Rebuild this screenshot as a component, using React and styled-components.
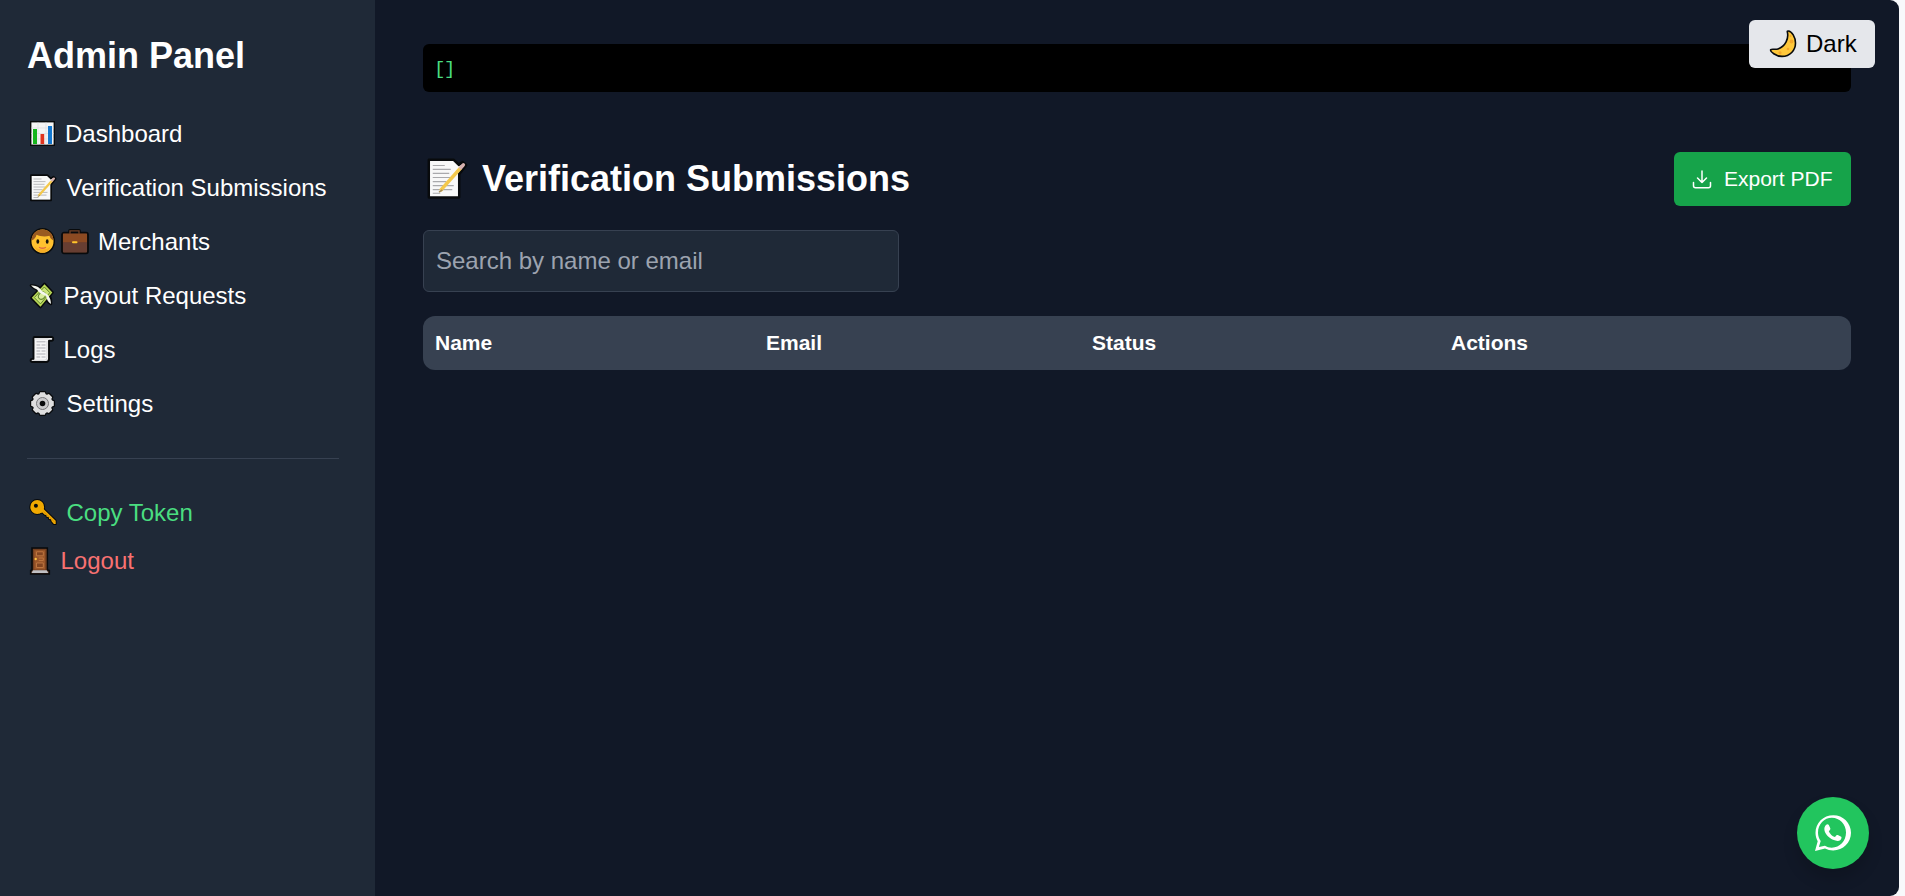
import React from "react";
import styled, { createGlobalStyle } from "styled-components";

const Global = createGlobalStyle`
  * { box-sizing: border-box; }
  body { margin: 0; background: #f8f9fb; font-family: "Liberation Sans", Arial, sans-serif; overflow: hidden; }
  button, input { font: inherit; }
`;

const Shell = styled.div`
  display: flex;
  width: 1899px;
  height: 896px;
  background: #111827;
  color: #fff;
  border-radius: 0 9px 9px 0;
  overflow: hidden;
`;

const Sidebar = styled.aside`
  width: 375px;
  flex: none;
  padding: 35px 36px 0 27px;
  background: #1f2937;
`;

const Brand = styled.h1`
  margin: 0 0 39px;
  font-size: 36px;
  line-height: 42px;
  font-weight: 700;
`;

const Nav = styled.nav`
  display: flex;
  flex-direction: column;
  align-items: flex-start;
  gap: ${(p) => p.$gap}px;
`;

const NavItem = styled.button`
  display: flex;
  align-items: center;
  height: 36px;
  padding: 0;
  border: 0;
  background: none;
  font-size: 24px;
  line-height: 36px;
  white-space: nowrap;
  color: ${(p) => p.$color || "#fff"};
`;

const IconSlot = styled.span`
  display: flex;
  flex: none;
  gap: 4px;
  width: ${(p) => p.$width}px;
  padding-left: 2px;
`;

const Divider = styled.hr`
  height: 1px;
  margin: 36px 0;
  border: 0;
  background: #374151;
`;

const Main = styled.main`
  flex: 1;
  padding: 44px 48px 0;
`;

const Output = styled.pre`
  height: 48px;
  margin: 0 0 60px;
  padding: 13px 11px;
  border-radius: 6px;
  background: #000;
  color: #4ade80;
  font: 19px/24px "Liberation Mono", monospace;
  letter-spacing: -1.5px;
`;

const PageHeader = styled.header`
  display: flex;
  align-items: center;
  justify-content: space-between;
  height: 54px;
  margin-bottom: 24px;
`;

const PageTitle = styled.h2`
  display: flex;
  align-items: center;
  gap: 14px;
  margin: 0;
  padding-left: 3px;
  font-size: 36px;
  line-height: 54px;
  font-weight: 700;
`;

const ExportButton = styled.button`
  display: flex;
  align-items: center;
  gap: 10px;
  width: 177px;
  height: 54px;
  padding: 0 0 0 16px;
  border: 0;
  border-radius: 6px;
  background: #16a34a;
  color: #fff;
  font-size: 21px;
  white-space: nowrap;
`;

const Search = styled.input`
  display: block;
  width: 476px;
  height: 62px;
  margin-bottom: 24px;
  padding: 0 12px;
  border: 1px solid #374151;
  border-radius: 6px;
  background: #1f2937;
  color: #fff;
  font-size: 24px;
  &::placeholder { color: #9ca3af; opacity: 1; }
`;

const Table = styled.div`
  border-radius: 12px;
  overflow: hidden;
`;

const HeadRow = styled.div`
  display: grid;
  grid-template-columns: 331px 326px 359px 1fr;
  height: 54px;
  background: #374151;
`;

const HeadCell = styled.div`
  padding-left: 12px;
  font-size: 21px;
  line-height: 54px;
  font-weight: 700;
`;

const ThemeToggle = styled.button`
  position: fixed;
  top: 20px;
  left: 1749px;
  display: flex;
  align-items: center;
  gap: 9px;
  width: 126px;
  height: 48px;
  padding: 0 0 0 20px;
  border: 0;
  border-radius: 6px;
  background: #e5e7eb;
  color: #000;
  font-size: 24px;
`;

const ChatButton = styled.button`
  position: fixed;
  top: 797px;
  left: 1797px;
  display: flex;
  align-items: center;
  justify-content: center;
  width: 72px;
  height: 72px;
  padding: 0;
  border: 0;
  border-radius: 50%;
  background: #22c55e;
  box-shadow: 0 10px 15px rgba(0, 0, 0, 0.16);
`;

const Svg = styled.svg`
  display: block;
  flex: none;
  width: ${(p) => p.$size || 28}px;
  height: ${(p) => p.$size || 28}px;
`;

const ChartIcon = () => (
  <Svg viewBox="0 0 28 28">
    <path d="M1 1h25v25H1z" fill="#080a0c" />
    <path d="M2.400 2.400h22.200v22.200H2.400z" fill="#f5f5f5" />
    <path d="M2.400 8h22.200M2.400 13.500h22.200M2.400 19h22.200M9 2.400v22.200M17 2.400v22.200" stroke="#dedee2" strokeWidth=".7" />
    <path d="M4 9h4v15H4z" fill="#16b51d" />
    <path d="M11.500 14h3.700v10h-3.700z" fill="#e0341f" />
    <path d="M19 6h4v18h-4z" fill="#1378d0" />
  </Svg>
);

const NoteIcon = ({ size }) => (
  <Svg viewBox="0 0 28 28" $size={size}>
    <path d="M2 1.200h16.200l3.600 3.300 2.700-1.700 2.100 1.900-4.600 6v15.500H2z" fill="#f7f7f7" stroke="#080a0c" strokeWidth="1.900" strokeLinejoin="round" />
    <path d="M2.700 2H18l3.300 3.300V25.500H2.700z" fill="#f8f8f8" />
    <path d="M4.500 5h8M4.500 7.600h12M4.500 10.300h11M4.500 13h12M4.500 15.700h9M4.500 18.400h14M4.500 21.100h13M4.500 23.500h5" stroke="#a9a9ac" strokeWidth=".8" />
    <path d="M9.600 21.800 23.200 6.500" stroke="#f4c84b" strokeWidth="2.300" />
    <path d="m8.700 22.800 2.200-1.600" stroke="#a68d59" strokeWidth="1" />
    <path d="m23.200 6.500 1.700-1.900" stroke="#d7b1af" strokeWidth="2.300" strokeLinecap="round" />
  </Svg>
);

const PersonIcon = () => (
  <Svg viewBox="0 0 28 28">
    <ellipse cx="13.500" cy="13.200" rx="11.800" ry="12.400" fill="#ffc12f" stroke="#080a0c" strokeWidth="1.500" />
    <path d="M2.700 12.500C2.500 6 7 1.600 13.500 1.600S24.500 6 24.300 12.500c-2-1-3.300-2.600-3.800-4.700-4.500 1.200-9.500.6-13-1-.4 2.400-2 4.600-4.800 5.700z" fill="#9a5a20" />
    <path d="M5 18q3 6.700 8.500 6.700T22 18q-3.500 3.500-8.500 3.500T5 18z" fill="#f7ae26" />
    <ellipse cx="8.800" cy="13.500" rx="1.400" ry="2.200" fill="#17130c" />
    <ellipse cx="18.200" cy="13.500" rx="1.400" ry="2.200" fill="#17130c" />
    <path d="M10.500 19.500q3 1.600 6 0" fill="none" stroke="#e06c43" strokeWidth="1.400" strokeLinecap="round" />
  </Svg>
);

const BriefcaseIcon = () => (
  <Svg viewBox="0 0 28 28">
    <path d="M9 6V2.700h9V6" fill="none" stroke="#080a0c" strokeWidth="3.600" strokeLinejoin="round" />
    <rect x="1" y="4.700" width="26" height="20.600" rx="2" fill="#653923" stroke="#080a0c" strokeWidth="1.800" />
    <path d="M2 5.700h24v9H2z" fill="#8c4a22" />
    <path d="M2 14.300h24v10H2z" fill="#673e32" />
    <path d="M9 6V2.800h9V6" fill="none" stroke="#714026" strokeWidth="1.300" />
    <rect x="11" y="13.300" width="5.500" height="2" rx="1" fill="#ffc52c" />
  </Svg>
);

const MoneyIcon = () => (
  <Svg viewBox="0 0 28 28">
    <g stroke="#080a0c" strokeWidth="2.600" strokeLinejoin="round">
      <path d="m15.500 2 8 8.500L11.500 25 2.500 15.800z" />
      <path d="M2 3.500c5-.5 9 1.500 12 6.500 5 1.500 9 5 8 12-3.500-1.500-5-4-5.500-8C11 12 9 10.500 8 7.500 6 6.500 4 5.500 2 3.500z" />
    </g>
    <path d="m15.500 2.300 7.800 8.200L11.500 24.700 2.800 15.800z" fill="#bada55" />
    <path d="m15.300 5 5.500 5.700-9.300 11.200-6.200-6.300z" fill="#cbe57a" stroke="#628431" strokeWidth="1" />
    <ellipse cx="13" cy="13.600" rx="3" ry="4" transform="rotate(42 13 13.600)" fill="#d9ed9e" stroke="#628431" strokeWidth="1" />
    <path d="M2 3.500c5-.5 8.500 1.500 11.500 6 5 2 8.500 6 8.500 12.500-3-1.500-4-4.500-5-8C12.500 12 9.500 10.500 8 7.500 6 6.500 4 5.500 2 3.500z" fill="#f5f7f0" />
  </Svg>
);

const ScrollIcon = () => (
  <Svg viewBox="0 0 28 28">
    <path d="M5.500 1h17c2.500 0 2 3.700 0 3.700h-2.500v17.800c0 2-1 3.500-3 3.500H3.500c-2.500 0-2.500-3 0-3h1V3q0-2 1-2z" fill="#f6f6f6" stroke="#080a0c" strokeWidth="1.900" strokeLinejoin="round" />
    <path d="M5.500 2.900h14M3 24.300h12.500q2.500 0 2.500-3V5" fill="none" stroke="#d0d0d3" strokeWidth=".9" />
    <path d="M7.500 5.800h9M7.500 9h3.700m1.300 0h4M7.500 12h9M7.500 15h3.700m1.300 0h4M7.500 18h9M7.500 21h3.700m1.300 0h4" stroke="#aeaeb4" strokeWidth="1" />
  </Svg>
);

const GearIcon = () => (
  <Svg viewBox="0 0 28 28">
    <g fill="#e1e1e3" stroke="#080a0c" strokeWidth="2.400" strokeLinejoin="round">
      {[0, 45, 90, 135].map((a) => (
        <path key={a} d="M11.200 2.200h4.600l1.200 3v16.600l-1.200 3h-4.600l-1.200-3V5.200z" transform={`rotate(${a} 13.500 13.500)`} />
      ))}
    </g>
    <g fill="#dededf">
      {[0, 45, 90, 135].map((a) => (
        <path key={a} d="M11.200 2.200h4.600l1.200 3v16.600l-1.200 3h-4.600l-1.200-3V5.200z" transform={`rotate(${a} 13.500 13.500)`} />
      ))}
      <circle cx="13.500" cy="13.500" r="9.800" />
    </g>
    <circle cx="13.500" cy="13.500" r="6" fill="#cacacc" stroke="#77777b" strokeWidth="1" />
    <circle cx="13.500" cy="13.500" r="2.800" fill="#080a0c" />
  </Svg>
);

const KeyIcon = () => (
  <Svg viewBox="0 0 28 28">
    <g fill="#080a0c" stroke="#080a0c" strokeWidth="2" strokeLinejoin="round">
      <circle cx="8.200" cy="8" r="6.900" />
      <path d="m10 14.200 3.300-.8 2.400 2.300 1.500.2.500 1.900 1.900.2.500 1.900 1.800.4.800 2.100 2.200 2.600h1.800v-3.300L13.500 9z" />
    </g>
    <g fill="#f1a900">
      <circle cx="8.200" cy="8" r="6.900" />
      <path d="m10 14.200 3.300-.8 2.400 2.300 1.500.2.500 1.900 1.900.2.500 1.900 1.800.4.800 2.100 2.200 2.600h1.800v-3.300L13.500 9z" />
    </g>
    <circle cx="6.900" cy="6.700" r="2" fill="#080a0c" />
    <path d="m14.500 12.500 11 10.500" stroke="#d58d00" strokeWidth=".9" />
  </Svg>
);

const DoorIcon = () => (
  <Svg viewBox="0 0 28 28">
    <path d="M3 1h15.300v22l2 .6V27H1.700v-3.400L3 23z" fill="#5c321d" stroke="#080a0c" strokeWidth="1.600" />
    <path d="M4 2h13.500v21H4z" fill="#754020" />
    <path d="M5.300 3.200h10.900v19.300H5.300z" fill="#9b572a" />
    <path d="M7.500 4.800h6.800v4H7.500zM7.500 16h6.800v4.500H7.500z" fill="#824521" stroke="#c27943" strokeWidth=".9" />
    <path d="M9.800 11h4.500v2.500H9.800" fill="none" stroke="#c27943" strokeWidth=".9" />
    <circle cx="6.700" cy="12" r="1.200" fill="#ffc341" />
    <path d="M4 23.200h13.700l1.700 2.700H2.500z" fill="#c0c0c3" />
  </Svg>
);

const MoonIcon = () => (
  <Svg viewBox="0 0 28 28">
    <path d="M18.300 1.800C20 8.500 16.500 16.500 9 19c-2.800.9-5.800-.4-7.300.6C.8 21.500 7 26.400 13 26.400c8 0 13.500-6 13.500-13.400 0-6-3.700-11.800-7.200-12-.8 0-1.100.3-1 .8z" fill="#ffc83b" stroke="#080a0c" strokeWidth="1.600" strokeLinejoin="round" />
    <circle cx="22.500" cy="11.500" r="1.900" fill="#f5a72b" />
    <circle cx="19" cy="19" r="1.300" fill="#f5a72b" />
    <circle cx="11" cy="22.800" r="1.600" fill="#f5a72b" />
    <circle cx="21.500" cy="6" r=".9" fill="#f5a72b" />
  </Svg>
);

const DownloadIcon = () => (
  <Svg viewBox="0 0 24 24" $size={24} fill="none" stroke="#fff" strokeWidth="1.500" strokeLinecap="round" strokeLinejoin="round">
    <path d="M3.500 15.500v3.200c0 1.200.9 2 2 2h13c1.100 0 2-.8 2-2v-3.200M12 4v11.500M7.500 11l4.500 4.500 4.500-4.500" />
  </Svg>
);

const WhatsAppIcon = () => (
  <Svg viewBox="0 0 36 36" $size={36}>
    <path fillRule="evenodd" fill="#fff" d="M18.400.2C8.200.2.500 8 .5 17.700c0 3.100.8 6 2.200 8.500L0 36l10-2.600c2.500 1.300 5.200 2 8.200 2C28 35.400 36 27.600 36 17.700 36 8 28 .2 18.400.2zM16.900 2.700c7.800 0 14.100 6.500 14.100 14.900 0 8.400-6.100 15.100-14.300 15.100-2.600 0-4.800-.7-6.800-1.900L3.900 32l1.800-6C4.100 23.700 3 20.900 3 17.700c0-8.700 6.200-15 13.900-15z" />
    <path fill="#fff" d="M11.200 9.800c1-.9 2-.9 2.600.2l1.500 3.300c.3.900-.1 1.600-1.500 3.100 1.400 2.700 3.300 4.500 6.100 5.700 1.500-2 2-2.400 2.900-2l3.400 1.700c.7.500.2 2.300-.7 3.100-1.700 1.500-4.100 1.300-7.500-.1-4.100-1.700-7.400-5.200-8.400-8.700-.6-2.800-.1-4.800 1.600-6.300z" />
  </Svg>
);

const LINKS = [
  { label: "Dashboard", width: 38, icons: [ChartIcon] },
  { label: "Verification Submissions", width: 39.500, icons: [NoteIcon] },
  { label: "Merchants", width: 71, icons: [PersonIcon, BriefcaseIcon] },
  { label: "Payout Requests", width: 36.500, icons: [MoneyIcon] },
  { label: "Logs", width: 36.500, icons: [ScrollIcon] },
  { label: "Settings", width: 39.500, icons: [GearIcon] },
];

const ACTIONS = [
  { label: "Copy Token", width: 39.500, icons: [KeyIcon], color: "#4ade80" },
  { label: "Logout", width: 33.500, icons: [DoorIcon], color: "#f87171" },
];

const COLUMNS = ["Name", "Email", "Status", "Actions"];

const NavList = ({ items, gap }) => (
  <Nav $gap={gap}>
    {items.map(({ label, width, icons, color }) => (
      <NavItem key={label} $color={color}>
        <IconSlot $width={width}>
          {icons.map((Icon, i) => <Icon key={i} />)}
        </IconSlot>
        {label}
      </NavItem>
    ))}
  </Nav>
);

export default function App() {
  return (
    <>
      <Global />
      <Shell>
        <Sidebar>
          <Brand>Admin Panel</Brand>
          <NavList items={LINKS} gap={18} />
          <Divider />
          <NavList items={ACTIONS} gap={12} />
        </Sidebar>
        <Main>
          <Output>[]</Output>
          <PageHeader>
            <PageTitle><NoteIcon size={42} />Verification Submissions</PageTitle>
            <ExportButton><DownloadIcon />Export PDF</ExportButton>
          </PageHeader>
          <Search placeholder="Search by name or email" />
          <Table>
            <HeadRow>
              {COLUMNS.map((c) => <HeadCell key={c}>{c}</HeadCell>)}
            </HeadRow>
          </Table>
        </Main>
      </Shell>
      <ThemeToggle><MoonIcon />Dark</ThemeToggle>
      <ChatButton aria-label="WhatsApp"><WhatsAppIcon /></ChatButton>
    </>
  );
}
